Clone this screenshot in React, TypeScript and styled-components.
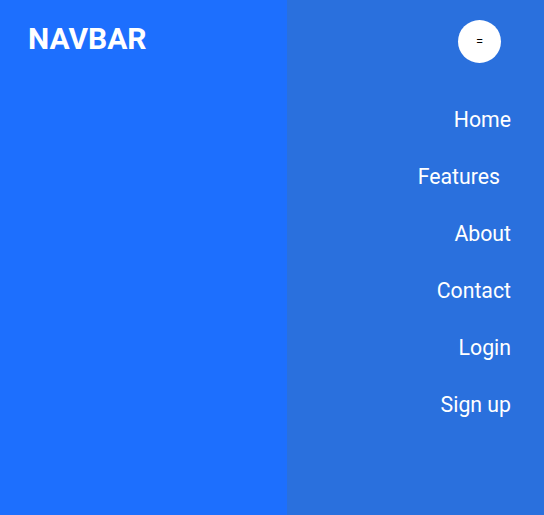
import styled, { createGlobalStyle } from "styled-components";

const GlobalStyle = createGlobalStyle`
  html, body {
    margin: 0;
    padding: 0;
    font-family: Roboto, "Liberation Sans", sans-serif;
  }
`;

const Page = styled.div`
  display: flex;
  height: 515px;
  width: 544px;
`;

const Brand = styled.div`
  width: 287px;
  background-color: #1d6ffe;
  padding: 20px 28px;
  box-sizing: border-box;
`;

const Logo = styled.h1`
  margin: 0;
  color: #ffffff;
  font-size: 30px;
  font-weight: 700;
  line-height: 38px;
`;

const Menu = styled.nav`
  flex: 1;
  background-color: #2a70dd;
  display: flex;
  flex-direction: column;
  align-items: flex-end;
  padding: 20px 33px 0 0;
`;

const Toggle = styled.button`
  width: 43px;
  height: 43px;
  border-radius: 50%;
  border: none;
  background: #ffffff;
  color: #000000;
  font-size: 13px;
  font-family: Roboto, "Liberation Sans", sans-serif;
  margin-right: 10px;
  padding: 0;
  cursor: pointer;
`;

const Links = styled.ul`
  list-style: none;
  margin: 28px 0 0;
  padding: 0;
  display: flex;
  flex-direction: column;
  align-items: flex-end;
`;

const Item = styled.li<{ $shift?: number }>`
  height: 57px;
  line-height: 57px;
  margin-right: ${(p) => p.$shift ?? 0}px;

  a {
    color: #ffffff;
    text-decoration: none;
    font-size: 1.33rem;
  }
`;

const links = [
  { label: "Home" },
  { label: "Features", shift: 11 },
  { label: "About" },
  { label: "Contact" },
  { label: "Login" },
  { label: "Sign up" },
];

function App() {
  return (
    <>
      <GlobalStyle />
      <Page>
        <Brand>
          <Logo>NAVBAR</Logo>
        </Brand>
        <Menu>
          <Toggle>=</Toggle>
          <Links>
            {links.map((l) => (
              <Item key={l.label} $shift={l.shift}>
                <a href="#">{l.label}</a>
              </Item>
            ))}
          </Links>
        </Menu>
      </Page>
    </>
  );
}

export default App;
